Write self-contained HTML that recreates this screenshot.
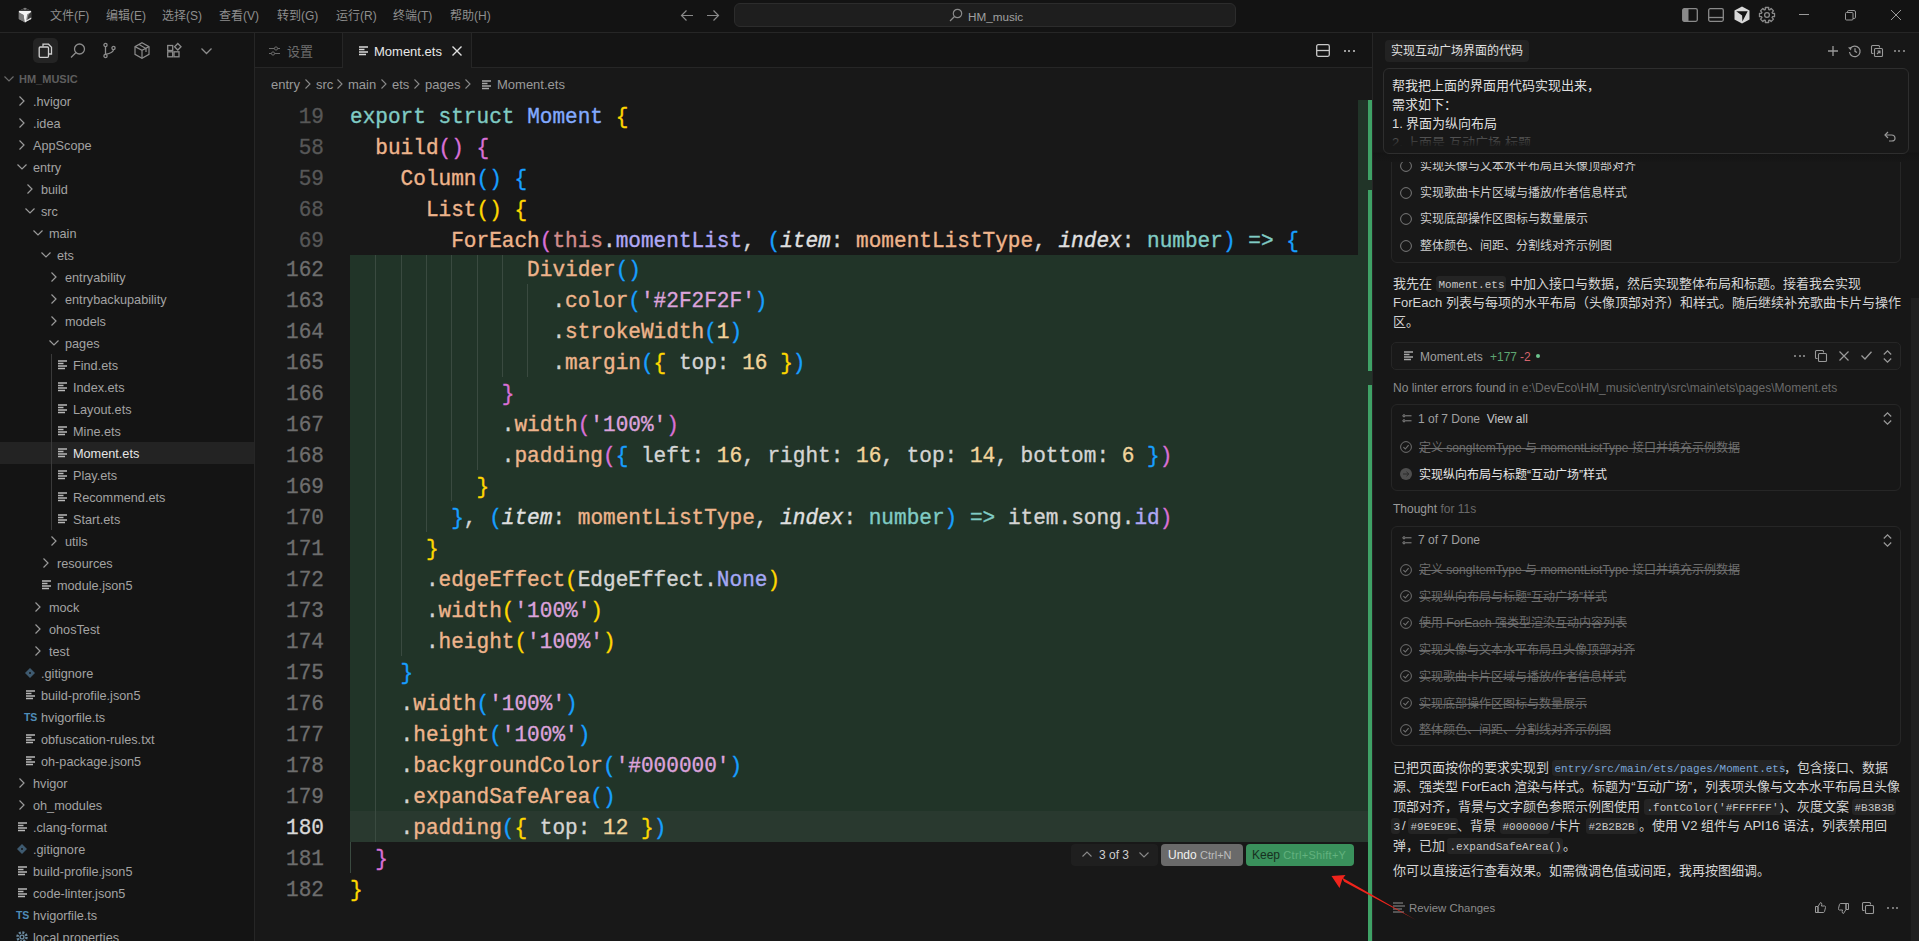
<!DOCTYPE html><html lang="zh-CN"><head><meta charset="utf-8"><style>
*{box-sizing:border-box;margin:0;padding:0}
html,body{width:1919px;height:941px;overflow:hidden;background:#181818}
body{position:relative;font-family:"Liberation Sans",sans-serif;color:#a8a8a8;font-size:13px}
.a{position:absolute;white-space:nowrap}
.m{font-family:"Liberation Mono",monospace}
svg.i{position:absolute;overflow:visible}
.code{position:absolute;left:350px;margin-top:1.5px;transform:scaleY(1.05);font-family:"Liberation Mono",monospace;font-size:21.08px;line-height:31px;height:31px;white-space:pre;color:#d4d4d4;-webkit-text-stroke:0.35px currentColor}
.ln{position:absolute;margin-top:1.5px;transform:scaleY(1.05);left:260px;width:64px;text-align:right;font-family:"Liberation Mono",monospace;font-size:21.08px;line-height:31px;color:#575757;-webkit-text-stroke:0.3px currentColor}
.k{color:#80cbc4}.c{color:#82aaff}.y{color:#ffd700}.p{color:#da70d6}.b{color:#179fff}
.f{color:#eeb48c}.th{color:#d08c8c}.pr{color:#b0a8f5}.it{font-style:italic;color:#e0e0e0}
.s{color:#dca3dc}.n{color:#f2d49b}.w{color:#d4d4d4}.nn{color:#a5a8f5}
.tree{position:absolute;margin-top:1px;height:22px;line-height:22px;font-size:12.7px;color:#a3a3a3;white-space:nowrap}
</style></head><body><div class="a" style="left:0;top:0;width:1919px;height:33px;background:#131313;border-bottom:1px solid #262626"></div><div class="a" style="left:0;top:33px;width:255px;height:908px;background:#141414;border-right:1px solid #262626"></div><div class="a" style="left:255px;top:33px;width:1117px;height:35px;background:#141414;border-bottom:1px solid #262626"></div><div class="a" style="left:255px;top:68px;width:1117px;height:873px;background:#181818"></div><div class="a" style="left:1372px;top:33px;width:547px;height:908px;background:#171717;border-left:1px solid #262626"></div><svg class="i" style="left:18px;top:7px" width="14" height="16" viewBox="0 0 14 16">
<path d="M7 0.8L13.2 4V12L7 15.2L0.8 12V4Z" fill="#8a8a8a"/>
<path d="M0.8 4L7 0.8L13.2 4Z" fill="#3a3a3a"/>
<path d="M5.5 1.8L7 0.8L8.5 1.8L7 3Z" fill="#888"/>
<path d="M13.2 4.5V12L9 14.2L10.5 8Z" fill="#3c3c3c"/>
<path d="M13.2 10.5V12L7 15.2L8 13.5Z" fill="#e8e8e8"/>
<path d="M0.8 4H13.2L12.8 5.3L9.2 7.2L7.8 15.2H6.6L5.6 8L1.2 5.4Z" fill="#f4f4f4"/>
<path d="M0.8 5.4L5.6 8L6.6 15.2L0.8 12Z" fill="#7a7a7a"/>
</svg><div class="a" style="left:50px;top:8px;font-size:12px;line-height:17px;color:#8e8e8e">文件(F)</div><div class="a" style="left:106px;top:8px;font-size:12px;line-height:17px;color:#8e8e8e">编辑(E)</div><div class="a" style="left:162px;top:8px;font-size:12px;line-height:17px;color:#8e8e8e">选择(S)</div><div class="a" style="left:219px;top:8px;font-size:12px;line-height:17px;color:#8e8e8e">查看(V)</div><div class="a" style="left:277px;top:8px;font-size:12px;line-height:17px;color:#8e8e8e">转到(G)</div><div class="a" style="left:336px;top:8px;font-size:12px;line-height:17px;color:#8e8e8e">运行(R)</div><div class="a" style="left:393px;top:8px;font-size:12px;line-height:17px;color:#8e8e8e">终端(T)</div><div class="a" style="left:450px;top:8px;font-size:12px;line-height:17px;color:#8e8e8e">帮助(H)</div><svg class="i" style="left:680px;top:9px" width="14" height="13" viewBox="0 0 14 13"><path d="M13 6.5H1.5M6.5 1.5L1.5 6.5L6.5 11.5" stroke="#8a8a8a" stroke-width="1.2" fill="none"/></svg><svg class="i" style="left:706px;top:9px" width="14" height="13" viewBox="0 0 14 13"><path d="M1 6.5H12.5M7.5 1.5L12.5 6.5L7.5 11.5" stroke="#8a8a8a" stroke-width="1.2" fill="none"/></svg><div class="a" style="left:734px;top:3px;width:502px;height:24px;background:#1e1e1e;border:1px solid #2c2c2c;border-radius:6px"></div><svg class="i" style="left:949px;top:8px" width="14" height="14" viewBox="0 0 14 14"><circle cx="8.5" cy="5.5" r="4.2" stroke="#8a8a8a" stroke-width="1.2" fill="none"/><path d="M5.5 8.5L1 13" stroke="#8a8a8a" stroke-width="1.3"/></svg><div class="a" style="left:968px;top:9px;font-size:11.7px;line-height:15px;color:#a0a0a0">HM_music</div><svg class="i" style="left:1682px;top:8px" width="16" height="14" viewBox="0 0 16 14"><rect x="0.7" y="0.7" width="14.6" height="12.6" rx="1.5" stroke="#8a8a8a" stroke-width="1.3" fill="none"/><rect x="1" y="1" width="5.5" height="12" fill="#8a8a8a"/></svg><svg class="i" style="left:1708px;top:8px" width="16" height="14" viewBox="0 0 16 14"><rect x="0.7" y="0.7" width="14.6" height="12.6" rx="1.5" stroke="#8a8a8a" stroke-width="1.3" fill="none"/><path d="M1 9.5H15" stroke="#8a8a8a" stroke-width="1.3"/></svg><svg class="i" style="left:1734px;top:6px" width="16" height="18" viewBox="0 0 16 18"><path d="M8 0.5L15.5 4.5V13.5L8 17.5L0.5 13.5V4.5Z" fill="#d8d8d8"/><path d="M2.2 5.2L13.7 5.3L8.4 15.4L8.1 9.5Z" fill="#131313"/></svg><svg class="i" style="left:1758px;top:6px" width="18" height="18" viewBox="0 0 18 18"><g fill="none" stroke="#8a8a8a" stroke-width="1.3" stroke-linejoin="round"><path d="M14.45 7.32L16.51 7.32L16.51 10.68L14.45 10.68L14.04 11.66L15.50 13.13L13.13 15.50L11.66 14.04L10.68 14.45L10.68 16.51L7.32 16.51L7.32 14.45L6.34 14.04L4.87 15.50L2.50 13.13L3.96 11.66L3.55 10.68L1.49 10.68L1.49 7.32L3.55 7.32L3.96 6.34L2.50 4.87L4.87 2.50L6.34 3.96L7.32 3.55L7.32 1.49L10.68 1.49L10.68 3.55L11.66 3.96L13.13 2.50L15.50 4.87L14.04 6.34Z"/><circle cx="9" cy="9" r="2.4"/></g></svg><div class="a" style="left:1799px;top:14px;width:10px;height:1px;background:#9a9a9a"></div><svg class="i" style="left:1845px;top:10px" width="11" height="11" viewBox="0 0 11 11"><rect x="0.5" y="2.5" width="7.5" height="7.5" rx="1" stroke="#9a9a9a" fill="none"/><path d="M2.5 2.5V1.8Q2.5 0.5 3.8 0.5H9Q10.5 0.5 10.5 2V7.2Q10.5 8.5 9.2 8.5H8" stroke="#9a9a9a" fill="none"/></svg><svg class="i" style="left:1891px;top:10px" width="10" height="10" viewBox="0 0 10 10"><path d="M0 0L10 10M10 0L0 10" stroke="#9a9a9a" stroke-width="1"/></svg><div class="a" style="left:33px;top:38px;width:25px;height:25px;background:#242424;border-radius:5px"></div><svg class="i" style="left:38px;top:43px" width="15" height="15" viewBox="0 0 15 15"><g fill="none" stroke="#d0d0d0" stroke-width="1.3"><path d="M5 3.5V1.2H10.5L13.5 4.2V11H11"/><rect x="1.2" y="4" width="9.3" height="10.3" rx="1"/></g></svg><svg class="i" style="left:70px;top:43px" width="16" height="15" viewBox="0 0 16 15"><g fill="none" stroke="#8c8c8c" stroke-width="1.3"><circle cx="9.5" cy="6" r="5"/><path d="M6 9.5L1 14.5"/></g></svg><svg class="i" style="left:103px;top:43px" width="13" height="15" viewBox="0 0 13 15"><g fill="none" stroke="#8c8c8c" stroke-width="1.3"><circle cx="2.5" cy="2" r="1.6"/><circle cx="2.5" cy="13" r="1.6"/><circle cx="10.5" cy="5" r="1.6"/><path d="M2.5 3.6V11.4M10.5 6.6Q10.5 10 2.5 11.4"/></g></svg><svg class="i" style="left:134px;top:42px" width="16" height="17" viewBox="0 0 16 17"><g fill="none" stroke="#8c8c8c" stroke-width="1.2"><path d="M8 0.8L15 4.6V12.4L8 16.2L1 12.4V4.6Z"/><path d="M1 4.6L8 8.4L15 4.6M8 8.4V16.2M5 2.5L12 6.5V10"/></g></svg><svg class="i" style="left:167px;top:43px" width="15" height="15" viewBox="0 0 15 15"><g fill="none" stroke="#8c8c8c" stroke-width="1.3"><rect x="0.7" y="2.5" width="5" height="5"/><rect x="0.7" y="8.8" width="5" height="5"/><rect x="7" y="8.8" width="5" height="5"/><path d="M10.8 0.5L14 3.8L10.8 7L7.6 3.8Z"/></g></svg><svg class="i" style="left:201px;top:48px" width="11" height="6" viewBox="0 0 11 6"><path d="M0.5 0.5L5.5 5.5L10.5 0.5" fill="none" stroke="#8c8c8c" stroke-width="1.3"/></svg><svg class="i" style="left:4px;top:76px" width="10" height="6" viewBox="0 0 10 6"><path d="M0.5 0.5L5 5L9.5 0.5" fill="none" stroke="#6a6a6a" stroke-width="1.2"/></svg><div class="a" style="left:19px;top:72px;font-size:11px;line-height:14px;font-weight:bold;color:#5e5e5e">HM_MUSIC</div><div class="a" style="left:0;top:442px;width:254px;height:22px;background:#232323"></div><div class="a" style="left:51px;top:354px;width:1px;height:176px;background:#3a3a3a"></div><svg class="i" style="left:19px;top:96px" width="6" height="10" viewBox="0 0 6 10"><path d="M0.5 0.5L5 5L0.5 9.5" fill="none" stroke="#9a9a9a" stroke-width="1.2"/></svg><div class="tree" style="left:33px;top:90px;color:#a3a3a3">.hvigor</div><svg class="i" style="left:19px;top:118px" width="6" height="10" viewBox="0 0 6 10"><path d="M0.5 0.5L5 5L0.5 9.5" fill="none" stroke="#9a9a9a" stroke-width="1.2"/></svg><div class="tree" style="left:33px;top:112px;color:#a3a3a3">.idea</div><svg class="i" style="left:19px;top:140px" width="6" height="10" viewBox="0 0 6 10"><path d="M0.5 0.5L5 5L0.5 9.5" fill="none" stroke="#9a9a9a" stroke-width="1.2"/></svg><div class="tree" style="left:33px;top:134px;color:#a3a3a3">AppScope</div><svg class="i" style="left:17px;top:164px" width="10" height="6" viewBox="0 0 10 6"><path d="M0.5 0.5L5 5L9.5 0.5" fill="none" stroke="#9a9a9a" stroke-width="1.2"/></svg><div class="tree" style="left:33px;top:156px;color:#a3a3a3">entry</div><svg class="i" style="left:27px;top:184px" width="6" height="10" viewBox="0 0 6 10"><path d="M0.5 0.5L5 5L0.5 9.5" fill="none" stroke="#9a9a9a" stroke-width="1.2"/></svg><div class="tree" style="left:41px;top:178px;color:#a3a3a3">build</div><svg class="i" style="left:25px;top:208px" width="10" height="6" viewBox="0 0 10 6"><path d="M0.5 0.5L5 5L9.5 0.5" fill="none" stroke="#9a9a9a" stroke-width="1.2"/></svg><div class="tree" style="left:41px;top:200px;color:#a3a3a3">src</div><svg class="i" style="left:33px;top:230px" width="10" height="6" viewBox="0 0 10 6"><path d="M0.5 0.5L5 5L9.5 0.5" fill="none" stroke="#9a9a9a" stroke-width="1.2"/></svg><div class="tree" style="left:49px;top:222px;color:#a3a3a3">main</div><svg class="i" style="left:41px;top:252px" width="10" height="6" viewBox="0 0 10 6"><path d="M0.5 0.5L5 5L9.5 0.5" fill="none" stroke="#9a9a9a" stroke-width="1.2"/></svg><div class="tree" style="left:57px;top:244px;color:#a3a3a3">ets</div><svg class="i" style="left:51px;top:272px" width="6" height="10" viewBox="0 0 6 10"><path d="M0.5 0.5L5 5L0.5 9.5" fill="none" stroke="#9a9a9a" stroke-width="1.2"/></svg><div class="tree" style="left:65px;top:266px;color:#a3a3a3">entryability</div><svg class="i" style="left:51px;top:294px" width="6" height="10" viewBox="0 0 6 10"><path d="M0.5 0.5L5 5L0.5 9.5" fill="none" stroke="#9a9a9a" stroke-width="1.2"/></svg><div class="tree" style="left:65px;top:288px;color:#a3a3a3">entrybackupability</div><svg class="i" style="left:51px;top:316px" width="6" height="10" viewBox="0 0 6 10"><path d="M0.5 0.5L5 5L0.5 9.5" fill="none" stroke="#9a9a9a" stroke-width="1.2"/></svg><div class="tree" style="left:65px;top:310px;color:#a3a3a3">models</div><svg class="i" style="left:49px;top:340px" width="10" height="6" viewBox="0 0 10 6"><path d="M0.5 0.5L5 5L9.5 0.5" fill="none" stroke="#9a9a9a" stroke-width="1.2"/></svg><div class="tree" style="left:65px;top:332px;color:#a3a3a3">pages</div><svg class="i" style="left:58px;top:360px" width="10" height="10" viewBox="0 0 10 10"><path d="M0 1H9M0 3.5H5.5M0 6H9M0 8.5H7" stroke="#b8b8b8" stroke-width="1.4"/></svg><div class="tree" style="left:73px;top:354px;color:#a3a3a3">Find.ets</div><svg class="i" style="left:58px;top:382px" width="10" height="10" viewBox="0 0 10 10"><path d="M0 1H9M0 3.5H5.5M0 6H9M0 8.5H7" stroke="#b8b8b8" stroke-width="1.4"/></svg><div class="tree" style="left:73px;top:376px;color:#a3a3a3">Index.ets</div><svg class="i" style="left:58px;top:404px" width="10" height="10" viewBox="0 0 10 10"><path d="M0 1H9M0 3.5H5.5M0 6H9M0 8.5H7" stroke="#b8b8b8" stroke-width="1.4"/></svg><div class="tree" style="left:73px;top:398px;color:#a3a3a3">Layout.ets</div><svg class="i" style="left:58px;top:426px" width="10" height="10" viewBox="0 0 10 10"><path d="M0 1H9M0 3.5H5.5M0 6H9M0 8.5H7" stroke="#b8b8b8" stroke-width="1.4"/></svg><div class="tree" style="left:73px;top:420px;color:#a3a3a3">Mine.ets</div><svg class="i" style="left:58px;top:448px" width="10" height="10" viewBox="0 0 10 10"><path d="M0 1H9M0 3.5H5.5M0 6H9M0 8.5H7" stroke="#b8b8b8" stroke-width="1.4"/></svg><div class="tree" style="left:73px;top:442px;color:#e6e6e6">Moment.ets</div><svg class="i" style="left:58px;top:470px" width="10" height="10" viewBox="0 0 10 10"><path d="M0 1H9M0 3.5H5.5M0 6H9M0 8.5H7" stroke="#b8b8b8" stroke-width="1.4"/></svg><div class="tree" style="left:73px;top:464px;color:#a3a3a3">Play.ets</div><svg class="i" style="left:58px;top:492px" width="10" height="10" viewBox="0 0 10 10"><path d="M0 1H9M0 3.5H5.5M0 6H9M0 8.5H7" stroke="#b8b8b8" stroke-width="1.4"/></svg><div class="tree" style="left:73px;top:486px;color:#a3a3a3">Recommend.ets</div><svg class="i" style="left:58px;top:514px" width="10" height="10" viewBox="0 0 10 10"><path d="M0 1H9M0 3.5H5.5M0 6H9M0 8.5H7" stroke="#b8b8b8" stroke-width="1.4"/></svg><div class="tree" style="left:73px;top:508px;color:#a3a3a3">Start.ets</div><svg class="i" style="left:51px;top:536px" width="6" height="10" viewBox="0 0 6 10"><path d="M0.5 0.5L5 5L0.5 9.5" fill="none" stroke="#9a9a9a" stroke-width="1.2"/></svg><div class="tree" style="left:65px;top:530px;color:#a3a3a3">utils</div><svg class="i" style="left:43px;top:558px" width="6" height="10" viewBox="0 0 6 10"><path d="M0.5 0.5L5 5L0.5 9.5" fill="none" stroke="#9a9a9a" stroke-width="1.2"/></svg><div class="tree" style="left:57px;top:552px;color:#a3a3a3">resources</div><svg class="i" style="left:42px;top:580px" width="10" height="10" viewBox="0 0 10 10"><path d="M0 1H9M0 3.5H5.5M0 6H9M0 8.5H7" stroke="#b8b8b8" stroke-width="1.4"/></svg><div class="tree" style="left:57px;top:574px;color:#a3a3a3">module.json5</div><svg class="i" style="left:35px;top:602px" width="6" height="10" viewBox="0 0 6 10"><path d="M0.5 0.5L5 5L0.5 9.5" fill="none" stroke="#9a9a9a" stroke-width="1.2"/></svg><div class="tree" style="left:49px;top:596px;color:#a3a3a3">mock</div><svg class="i" style="left:35px;top:624px" width="6" height="10" viewBox="0 0 6 10"><path d="M0.5 0.5L5 5L0.5 9.5" fill="none" stroke="#9a9a9a" stroke-width="1.2"/></svg><div class="tree" style="left:49px;top:618px;color:#a3a3a3">ohosTest</div><svg class="i" style="left:35px;top:646px" width="6" height="10" viewBox="0 0 6 10"><path d="M0.5 0.5L5 5L0.5 9.5" fill="none" stroke="#9a9a9a" stroke-width="1.2"/></svg><div class="tree" style="left:49px;top:640px;color:#a3a3a3">test</div><svg class="i" style="left:25px;top:668px" width="10" height="10" viewBox="0 0 10 10"><path d="M5 0L10 5L5 10L0 5Z" fill="#3e5a70"/><circle cx="5" cy="5" r="1" fill="#141414"/></svg><div class="tree" style="left:41px;top:662px;color:#a3a3a3">.gitignore</div><svg class="i" style="left:26px;top:690px" width="10" height="10" viewBox="0 0 10 10"><path d="M0 1H9M0 3.5H5.5M0 6H9M0 8.5H7" stroke="#b8b8b8" stroke-width="1.4"/></svg><div class="tree" style="left:41px;top:684px;color:#a3a3a3">build-profile.json5</div><div class="a" style="left:24px;top:711px;font-size:10.5px;line-height:12px;font-weight:bold;color:#4f8db8;letter-spacing:-0.2px">TS</div><div class="tree" style="left:41px;top:706px;color:#a3a3a3">hvigorfile.ts</div><svg class="i" style="left:26px;top:734px" width="10" height="10" viewBox="0 0 10 10"><path d="M0 1H9M0 3.5H5.5M0 6H9M0 8.5H7" stroke="#b8b8b8" stroke-width="1.4"/></svg><div class="tree" style="left:41px;top:728px;color:#a3a3a3">obfuscation-rules.txt</div><svg class="i" style="left:26px;top:756px" width="10" height="10" viewBox="0 0 10 10"><path d="M0 1H9M0 3.5H5.5M0 6H9M0 8.5H7" stroke="#b8b8b8" stroke-width="1.4"/></svg><div class="tree" style="left:41px;top:750px;color:#a3a3a3">oh-package.json5</div><svg class="i" style="left:19px;top:778px" width="6" height="10" viewBox="0 0 6 10"><path d="M0.5 0.5L5 5L0.5 9.5" fill="none" stroke="#9a9a9a" stroke-width="1.2"/></svg><div class="tree" style="left:33px;top:772px;color:#a3a3a3">hvigor</div><svg class="i" style="left:19px;top:800px" width="6" height="10" viewBox="0 0 6 10"><path d="M0.5 0.5L5 5L0.5 9.5" fill="none" stroke="#9a9a9a" stroke-width="1.2"/></svg><div class="tree" style="left:33px;top:794px;color:#a3a3a3">oh_modules</div><svg class="i" style="left:18px;top:822px" width="10" height="10" viewBox="0 0 10 10"><path d="M0 1H9M0 3.5H5.5M0 6H9M0 8.5H7" stroke="#b8b8b8" stroke-width="1.4"/></svg><div class="tree" style="left:33px;top:816px;color:#a3a3a3">.clang-format</div><svg class="i" style="left:17px;top:844px" width="10" height="10" viewBox="0 0 10 10"><path d="M5 0L10 5L5 10L0 5Z" fill="#3e5a70"/><circle cx="5" cy="5" r="1" fill="#141414"/></svg><div class="tree" style="left:33px;top:838px;color:#a3a3a3">.gitignore</div><svg class="i" style="left:18px;top:866px" width="10" height="10" viewBox="0 0 10 10"><path d="M0 1H9M0 3.5H5.5M0 6H9M0 8.5H7" stroke="#b8b8b8" stroke-width="1.4"/></svg><div class="tree" style="left:33px;top:860px;color:#a3a3a3">build-profile.json5</div><svg class="i" style="left:18px;top:888px" width="10" height="10" viewBox="0 0 10 10"><path d="M0 1H9M0 3.5H5.5M0 6H9M0 8.5H7" stroke="#b8b8b8" stroke-width="1.4"/></svg><div class="tree" style="left:33px;top:882px;color:#a3a3a3">code-linter.json5</div><div class="a" style="left:16px;top:909px;font-size:10.5px;line-height:12px;font-weight:bold;color:#4f8db8;letter-spacing:-0.2px">TS</div><div class="tree" style="left:33px;top:904px;color:#a3a3a3">hvigorfile.ts</div><svg class="i" style="left:16px;top:931px" width="12" height="12" viewBox="0 0 12 12"><circle cx="6" cy="6" r="4.5" fill="none" stroke="#6a8aa0" stroke-width="2.5" stroke-dasharray="2 1.5"/><circle cx="6" cy="6" r="2.6" fill="#6a8aa0"/><circle cx="6" cy="6" r="1.2" fill="#141414"/></svg><div class="tree" style="left:33px;top:926px;color:#a3a3a3">local.properties</div><div class="a" style="left:342px;top:33px;width:130px;height:35px;background:#181818;border-left:1px solid #262626;border-right:1px solid #262626"></div><svg class="i" style="left:269px;top:45px" width="12" height="12" viewBox="0 0 12 12"><g fill="none" stroke="#6a6a6a" stroke-width="1"><path d="M0 3.5H11M0 8.5H11"/></g><circle cx="7" cy="3.5" r="1.6" fill="#141414" stroke="#6a6a6a"/><circle cx="4" cy="8.5" r="1.6" fill="#141414" stroke="#6a6a6a"/></svg><div class="a" style="left:287px;top:43px;font-size:13px;line-height:17px;color:#6e6e6e">设置</div><svg class="i" style="left:359px;top:46px" width="10" height="10" viewBox="0 0 10 10"><path d="M0 1H9M0 3.5H5.5M0 6H9M0 8.5H7" stroke="#d8d8d8" stroke-width="1.4"/></svg><div class="a" style="left:374px;top:43px;font-size:13px;line-height:17px;color:#e8e8e8">Moment.ets</div><svg class="i" style="left:452px;top:46px" width="10" height="10" viewBox="0 0 10 10"><path d="M0.5 0.5L9.5 9.5M9.5 0.5L0.5 9.5" stroke="#e0e0e0" stroke-width="1.4"/></svg><svg class="i" style="left:1316px;top:44px" width="14" height="13" viewBox="0 0 14 13"><rect x="0.7" y="0.7" width="12.6" height="11.6" rx="1.5" fill="none" stroke="#c8c8c8" stroke-width="1.3"/><path d="M1 6.5H13" stroke="#c8c8c8" stroke-width="1.3"/></svg><div class="a" style="left:1343.5px;top:50px;width:2.4px;height:2.4px;background:#c8c8c8;border-radius:50%"></div><div class="a" style="left:1348px;top:50px;width:2.4px;height:2.4px;background:#c8c8c8;border-radius:50%"></div><div class="a" style="left:1352.5px;top:50px;width:2.4px;height:2.4px;background:#c8c8c8;border-radius:50%"></div><div class="a" style="left:271px;top:76px;font-size:13px;line-height:17px;color:#9a9a9a">entry</div><div class="a" style="left:316px;top:76px;font-size:13px;line-height:17px;color:#9a9a9a">src</div><div class="a" style="left:348px;top:76px;font-size:13px;line-height:17px;color:#9a9a9a">main</div><div class="a" style="left:392px;top:76px;font-size:13px;line-height:17px;color:#9a9a9a">ets</div><div class="a" style="left:425px;top:76px;font-size:13px;line-height:17px;color:#9a9a9a">pages</div><svg class="i" style="left:305px;top:79px" width="6" height="10" viewBox="0 0 6 10"><path d="M0.5 0.5L5 5L0.5 9.5" fill="none" stroke="#8a8a8a" stroke-width="1.1"/></svg><svg class="i" style="left:337px;top:79px" width="6" height="10" viewBox="0 0 6 10"><path d="M0.5 0.5L5 5L0.5 9.5" fill="none" stroke="#8a8a8a" stroke-width="1.1"/></svg><svg class="i" style="left:381px;top:79px" width="6" height="10" viewBox="0 0 6 10"><path d="M0.5 0.5L5 5L0.5 9.5" fill="none" stroke="#8a8a8a" stroke-width="1.1"/></svg><svg class="i" style="left:414px;top:79px" width="6" height="10" viewBox="0 0 6 10"><path d="M0.5 0.5L5 5L0.5 9.5" fill="none" stroke="#8a8a8a" stroke-width="1.1"/></svg><svg class="i" style="left:465px;top:79px" width="6" height="10" viewBox="0 0 6 10"><path d="M0.5 0.5L5 5L0.5 9.5" fill="none" stroke="#8a8a8a" stroke-width="1.1"/></svg><svg class="i" style="left:482px;top:80px" width="10" height="10" viewBox="0 0 10 10"><path d="M0 1H9M0 3.5H5.5M0 6H9M0 8.5H7" stroke="#a8a8a8" stroke-width="1.4"/></svg><div class="a" style="left:497px;top:76px;font-size:13px;line-height:17px;color:#9a9a9a">Moment.ets</div><div class="a" style="left:350px;top:253px;width:1018px;height:558px;background:#213428"></div><div class="a" style="left:350px;top:811px;width:1018px;height:31px;background:#29392f"></div><div class="a" style="left:375.3px;top:253px;width:1px;height:589px;background:#3a4a40"></div><div class="a" style="left:350px;top:842px;width:1px;height:31px;background:#3a4a40"></div><div class="a" style="left:400.6px;top:253px;width:1px;height:403px;background:#3a4a40"></div><div class="a" style="left:425.9px;top:253px;width:1px;height:279px;background:#3a4a40"></div><div class="a" style="left:451.2px;top:253px;width:1px;height:248px;background:#3a4a40"></div><div class="a" style="left:476.5px;top:253px;width:1px;height:217px;background:#3a4a40"></div><div class="a" style="left:501.8px;top:253px;width:1px;height:124px;background:#3a4a40"></div><div class="a" style="left:527.1px;top:284px;width:1px;height:93px;background:#3a4a40"></div><div class="a" style="left:400.6px;top:625px;width:1px;height:0px;background:#3a4a40"></div><div class="a" style="left:255px;top:100px;width:1103px;height:155px;background:#181818"></div><div class="ln" style="top:100px">19</div><div class="code" style="top:100px;left:350.0px"><span class="k">export</span> <span class="k">struct</span> <span class="c">Moment</span> <span class="y">{</span></div><div class="ln" style="top:131px">58</div><div class="code" style="top:131px;left:375.3px"><span class="f">build</span><span class="p">()</span> <span class="p">{</span></div><div class="ln" style="top:162px">59</div><div class="code" style="top:162px;left:400.6px"><span class="f">Column</span><span class="b">()</span> <span class="b">{</span></div><div class="ln" style="top:193px">68</div><div class="code" style="top:193px;left:425.9px"><span class="f">List</span><span class="y">()</span> <span class="y">{</span></div><div class="ln" style="top:224px">69</div><div class="code" style="top:224px;left:451.2px"><span class="f">ForEach</span><span class="p">(</span><span class="th">this</span><span class="w">.</span><span class="pr">momentList</span><span class="w">, </span><span class="b">(</span><span class="it">item</span><span class="w">: </span><span class="f">momentListType</span><span class="w">, </span><span class="it">index</span><span class="w">: </span><span class="k">number</span><span class="b">)</span> <span class="k">=></span> <span class="b">{</span></div><div class="ln" style="top:253px;color:#6e6e6e">162</div><div class="code" style="top:253px;left:527.1px"><span class="f">Divider</span><span class="b">()</span></div><div class="ln" style="top:284px;color:#6e6e6e">163</div><div class="code" style="top:284px;left:552.4px"><span class="w">.</span><span class="f">color</span><span class="b">(</span><span class="s">'#2F2F2F'</span><span class="b">)</span></div><div class="ln" style="top:315px;color:#6e6e6e">164</div><div class="code" style="top:315px;left:552.4px"><span class="w">.</span><span class="f">strokeWidth</span><span class="b">(</span><span class="n">1</span><span class="b">)</span></div><div class="ln" style="top:346px;color:#6e6e6e">165</div><div class="code" style="top:346px;left:552.4px"><span class="w">.</span><span class="f">margin</span><span class="b">(</span><span class="y">{</span><span class="w"> top: </span><span class="n">16</span> <span class="y">}</span><span class="b">)</span></div><div class="ln" style="top:377px;color:#6e6e6e">166</div><div class="code" style="top:377px;left:501.8px"><span class="p">}</span></div><div class="ln" style="top:408px;color:#6e6e6e">167</div><div class="code" style="top:408px;left:501.8px"><span class="w">.</span><span class="f">width</span><span class="p">(</span><span class="s">'100%'</span><span class="p">)</span></div><div class="ln" style="top:439px;color:#6e6e6e">168</div><div class="code" style="top:439px;left:501.8px"><span class="w">.</span><span class="f">padding</span><span class="p">(</span><span class="b">{</span><span class="w"> left: </span><span class="n">16</span><span class="w">, right: </span><span class="n">16</span><span class="w">, top: </span><span class="n">14</span><span class="w">, bottom: </span><span class="n">6</span> <span class="b">}</span><span class="p">)</span></div><div class="ln" style="top:470px;color:#6e6e6e">169</div><div class="code" style="top:470px;left:476.5px"><span class="y">}</span></div><div class="ln" style="top:501px;color:#6e6e6e">170</div><div class="code" style="top:501px;left:451.2px"><span class="b">}</span><span class="w">, </span><span class="b">(</span><span class="it">item</span><span class="w">: </span><span class="f">momentListType</span><span class="w">, </span><span class="it">index</span><span class="w">: </span><span class="k">number</span><span class="b">)</span> <span class="k">=></span><span class="w"> item.song.</span><span class="pr">id</span><span class="p">)</span></div><div class="ln" style="top:532px;color:#6e6e6e">171</div><div class="code" style="top:532px;left:425.9px"><span class="y">}</span></div><div class="ln" style="top:563px;color:#6e6e6e">172</div><div class="code" style="top:563px;left:425.9px"><span class="w">.</span><span class="f">edgeEffect</span><span class="y">(</span><span class="w">EdgeEffect.</span><span class="nn">None</span><span class="y">)</span></div><div class="ln" style="top:594px;color:#6e6e6e">173</div><div class="code" style="top:594px;left:425.9px"><span class="w">.</span><span class="f">width</span><span class="y">(</span><span class="s">'100%'</span><span class="y">)</span></div><div class="ln" style="top:625px;color:#6e6e6e">174</div><div class="code" style="top:625px;left:425.9px"><span class="w">.</span><span class="f">height</span><span class="y">(</span><span class="s">'100%'</span><span class="y">)</span></div><div class="ln" style="top:656px;color:#6e6e6e">175</div><div class="code" style="top:656px;left:400.6px"><span class="b">}</span></div><div class="ln" style="top:687px;color:#6e6e6e">176</div><div class="code" style="top:687px;left:400.6px"><span class="w">.</span><span class="f">width</span><span class="b">(</span><span class="s">'100%'</span><span class="b">)</span></div><div class="ln" style="top:718px;color:#6e6e6e">177</div><div class="code" style="top:718px;left:400.6px"><span class="w">.</span><span class="f">height</span><span class="b">(</span><span class="s">'100%'</span><span class="b">)</span></div><div class="ln" style="top:749px;color:#6e6e6e">178</div><div class="code" style="top:749px;left:400.6px"><span class="w">.</span><span class="f">backgroundColor</span><span class="b">(</span><span class="s">'#000000'</span><span class="b">)</span></div><div class="ln" style="top:780px;color:#6e6e6e">179</div><div class="code" style="top:780px;left:400.6px"><span class="w">.</span><span class="f">expandSafeArea</span><span class="b">()</span></div><div class="ln" style="top:811px;color:#d8d8d8">180</div><div class="code" style="top:811px;left:400.6px"><span class="w">.</span><span class="f">padding</span><span class="b">(</span><span class="y">{</span><span class="w"> top: </span><span class="n">12</span> <span class="y">}</span><span class="b">)</span></div><div class="ln" style="top:842px;color:#6e6e6e">181</div><div class="code" style="top:842px;left:375.3px"><span class="p">}</span></div><div class="ln" style="top:873px;color:#6e6e6e">182</div><div class="code" style="top:873px;left:350.0px"><span class="y">}</span></div><div class="a" style="left:1358px;top:100px;width:14px;height:155px;background:#213428"></div><div class="a" style="left:1368px;top:100px;width:4px;height:841px;background:#213428"></div><div class="a" style="left:1368px;top:100px;width:4px;height:80px;background:#3fa266"></div><div class="a" style="left:1368px;top:190px;width:4px;height:181px;background:#3fa266"></div><div class="a" style="left:1368px;top:385px;width:4px;height:556px;background:#3fa266"></div><div class="a" style="left:1071px;top:844px;width:87px;height:22px;background:#1f1f1f;border-radius:4px"></div><svg class="i" style="left:1082px;top:851px" width="10" height="6" viewBox="0 0 10 6"><path d="M0.5 5.5L5 1L9.5 5.5" fill="none" stroke="#8a8a8a" stroke-width="1.1"/></svg><div class="a" style="left:1099px;top:847px;font-size:12px;line-height:16px;color:#d0d0d0">3 of 3</div><svg class="i" style="left:1139px;top:852px" width="10" height="6" viewBox="0 0 10 6"><path d="M0.5 0.5L5 5L9.5 0.5" fill="none" stroke="#8a8a8a" stroke-width="1.1"/></svg><div class="a" style="left:1161px;top:844px;width:82px;height:22px;background:#6a6a6a;border-radius:4px"></div><div class="a" style="left:1168px;top:847px;font-size:12px;line-height:16px;color:#f0f0f0">Undo <span style="color:#bdbdbd;font-size:11px">Ctrl+N</span></div><div class="a" style="left:1246px;top:844px;width:108px;height:22px;background:#3a915c;border-radius:4px"></div><div class="a" style="left:1252px;top:847px;font-size:12px;line-height:16px;color:#17301f">Keep <span style="color:#62b27e;font-size:11px;letter-spacing:0.3px">Ctrl+Shift+Y</span></div><div class="a" style="left:1385px;top:40px;width:144px;height:22px;background:#222;border-radius:4px"></div><div class="a" style="left:1391px;top:43px;font-size:12px;line-height:16px;color:#e0e0e0">实现互动广场界面的代码</div><svg class="i" style="left:1828px;top:46px" width="10" height="10" viewBox="0 0 10 10"><path d="M5 0V10M0 5H10" stroke="#9a9a9a" stroke-width="1.3"/></svg><svg class="i" style="left:1848px;top:45px" width="13" height="12" viewBox="0 0 13 12"><g fill="none" stroke="#9a9a9a" stroke-width="1.2"><path d="M2.3 3.5A5.3 5.3 0 1 1 1.5 7"/><path d="M7 3.2V6.3L9 7.6"/></g><path d="M0 2.5L3.5 2L3 5.5Z" fill="#9a9a9a"/></svg><svg class="i" style="left:1871px;top:45px" width="12" height="12" viewBox="0 0 12 12"><g fill="none" stroke="#9a9a9a" stroke-width="1.1"><rect x="3.5" y="3.5" width="8" height="8" rx="1"/><path d="M2.5 8.5H1.5Q0.5 8.5 0.5 7.5V1.5Q0.5 0.5 1.5 0.5H7.5Q8.5 0.5 8.5 1.5V2.5"/><path d="M6 9L9 6M6.5 6H9V8.5"/></g></svg><div class="a" style="left:1893.5px;top:50px;width:2.4px;height:2.4px;background:#9a9a9a;border-radius:50%"></div><div class="a" style="left:1898px;top:50px;width:2.4px;height:2.4px;background:#9a9a9a;border-radius:50%"></div><div class="a" style="left:1902.5px;top:50px;width:2.4px;height:2.4px;background:#9a9a9a;border-radius:50%"></div><div class="a" style="left:1391px;top:120px;width:510px;height:143px;border:1px solid #262626;border-radius:6px;background:#181818"></div><svg class="i" style="left:1400px;top:160.0px" width="12" height="12" viewBox="0 0 12 12"><circle cx="6" cy="6" r="5.4" fill="none" stroke="#7a7a7a" stroke-width="1"/></svg><div class="a" style="left:1420px;top:158.0px;font-size:12px;line-height:16px;color:#cfcfcf">实现头像与文本水平布局且头像顶部对齐</div><svg class="i" style="left:1400px;top:186.5px" width="12" height="12" viewBox="0 0 12 12"><circle cx="6" cy="6" r="5.4" fill="none" stroke="#7a7a7a" stroke-width="1"/></svg><div class="a" style="left:1420px;top:184.5px;font-size:12px;line-height:16px;color:#cfcfcf">实现歌曲卡片区域与播放/作者信息样式</div><svg class="i" style="left:1400px;top:213.0px" width="12" height="12" viewBox="0 0 12 12"><circle cx="6" cy="6" r="5.4" fill="none" stroke="#7a7a7a" stroke-width="1"/></svg><div class="a" style="left:1420px;top:211.0px;font-size:12px;line-height:16px;color:#cfcfcf">实现底部操作区图标与数量展示</div><svg class="i" style="left:1400px;top:239.5px" width="12" height="12" viewBox="0 0 12 12"><circle cx="6" cy="6" r="5.4" fill="none" stroke="#7a7a7a" stroke-width="1"/></svg><div class="a" style="left:1420px;top:237.5px;font-size:12px;line-height:16px;color:#cfcfcf">整体颜色、间距、分割线对齐示例图</div><div class="a" style="left:1373px;top:64px;width:546px;height:98px;background:linear-gradient(#171717 0,#171717 88px,#141414 89px,#171717 98px)"></div><div class="a" style="left:1383px;top:68px;width:526px;height:86px;border:1px solid #2e2e2e;border-radius:6px;background:#181818;overflow:hidden"></div><div class="a" style="left:1392px;top:77px;font-size:13px;line-height:18px;color:#dedede">帮我把上面的界面用代码实现出来，</div><div class="a" style="left:1392px;top:96px;font-size:13px;line-height:18px;color:#dedede">需求如下：</div><div class="a" style="left:1392px;top:115px;font-size:13px;line-height:18px;color:#dedede">1. 界面为纵向布局</div><div class="a" style="left:1392px;top:134px;height:12px;overflow:hidden;font-size:13px;line-height:18px;color:#6a6a6a">2. 上面是 互动广场 标题</div><div class="a" style="left:1384px;top:136px;width:524px;height:10px;background:linear-gradient(rgba(24,24,24,0.2),rgba(24,24,24,0.85))"></div><svg class="i" style="left:1884px;top:131px" width="12" height="11" viewBox="0 0 12 11"><g fill="none" stroke="#9a9a9a" stroke-width="1.2"><path d="M4 1L1 4L4 7"/><path d="M1 4H7.5Q11 4 11 7.2Q11 10 7.5 10H5"/></g></svg><div class="a" style="left:1393px;top:275px;font-size:13px;line-height:18px;color:#d4d4d4">我先在</div><div class="a" style="left:1436px;top:276px;width:70px;height:16px;background:#242424;border-radius:3px"></div><div class="a m" style="left:1438.5px;top:277px;font-size:11px;line-height:16px;color:#c8c8c8">Moment.ets</div><div class="a" style="left:1510px;top:275px;font-size:13px;line-height:18px;color:#d4d4d4">中加入接口与数据，然后实现整体布局和标题。接着我会实现</div><div class="a" style="left:1393px;top:294px;font-size:13px;line-height:18px;color:#d4d4d4">ForEach 列表与每项的水平布局（头像顶部对齐）和样式。随后继续补充歌曲卡片与操作</div><div class="a" style="left:1393px;top:313px;font-size:13px;line-height:18px;color:#d4d4d4">区。</div><div class="a" style="left:1391px;top:342px;width:510px;height:28px;border:1px solid #262626;border-radius:5px;background:#191919"></div><svg class="i" style="left:1404px;top:351px" width="10" height="10" viewBox="0 0 10 10"><path d="M0 1H9M0 3.5H5.5M0 6H9M0 8.5H7" stroke="#a8a8a8" stroke-width="1.4"/></svg><div class="a" style="left:1420px;top:349px;font-size:12px;line-height:16px;color:#a0a0a0">Moment.ets</div><div class="a" style="left:1490px;top:349px;font-size:12px;line-height:16px;color:#5ea672">+177</div><div class="a" style="left:1520px;top:349px;font-size:12px;line-height:16px;color:#d4646c">-2</div><div class="a" style="left:1536px;top:354px;width:4px;height:4px;border-radius:50%;background:#6cc58e"></div><div class="a" style="left:1794px;top:355px;width:2.2px;height:2.2px;background:#9a9a9a;border-radius:50%"></div><div class="a" style="left:1798.5px;top:355px;width:2.2px;height:2.2px;background:#9a9a9a;border-radius:50%"></div><div class="a" style="left:1803px;top:355px;width:2.2px;height:2.2px;background:#9a9a9a;border-radius:50%"></div><svg class="i" style="left:1815px;top:350px" width="12" height="12" viewBox="0 0 12 12"><g fill="none" stroke="#9a9a9a" stroke-width="1.1"><rect x="3.5" y="3.5" width="8" height="8" rx="1"/><path d="M2.5 8.5H1.5Q0.5 8.5 0.5 7.5V1.5Q0.5 0.5 1.5 0.5H7.5Q8.5 0.5 8.5 1.5V2.5"/></g></svg><svg class="i" style="left:1839px;top:351px" width="10" height="10" viewBox="0 0 10 10"><path d="M0.5 0.5L9.5 9.5M9.5 0.5L0.5 9.5" stroke="#9a9a9a" stroke-width="1.2"/></svg><svg class="i" style="left:1861px;top:351px" width="11" height="9" viewBox="0 0 11 9"><path d="M0.5 4.5L4 8L10.5 0.8" fill="none" stroke="#9a9a9a" stroke-width="1.3"/></svg><svg class="i" style="left:1883px;top:350px" width="9" height="13" viewBox="0 0 9 13"><path d="M0.8 4.5L4.5 0.8L8.2 4.5M0.8 8.5L4.5 12.2L8.2 8.5" fill="none" stroke="#9a9a9a" stroke-width="1.2"/></svg><div class="a" style="left:1393px;top:380px;font-size:12px;line-height:16px;color:#8c8c8c">No linter errors found <span style="color:#6a6a6a">in e:\DevEco\HM_music\entry\src\main\ets\pages\Moment.ets</span></div><div class="a" style="left:1391px;top:404px;width:510px;height:87px;border:1px solid #262626;border-radius:6px"></div><svg class="i" style="left:1402px;top:414px" width="10" height="9" viewBox="0 0 10 9"><g fill="none" stroke="#8a8a8a" stroke-width="1"><circle cx="2" cy="1.8" r="1.1"/><circle cx="2" cy="6.8" r="1.1"/><path d="M3.5 1.8H9.5M3.5 6.8H9.5"/></g></svg><div class="a" style="left:1418px;top:411px;font-size:12px;line-height:16px;color:#a0a0a0">1 of 7 Done&nbsp; <span style="color:#c8c8c8">View all</span></div><svg class="i" style="left:1883px;top:412px" width="9" height="13" viewBox="0 0 9 13"><path d="M0.8 4.5L4.5 0.8L8.2 4.5M0.8 8.5L4.5 12.2L8.2 8.5" fill="none" stroke="#9a9a9a" stroke-width="1.2"/></svg><svg class="i" style="left:1400px;top:441px" width="12" height="12" viewBox="0 0 12 12"><circle cx="6" cy="6" r="5.4" fill="none" stroke="#707070" stroke-width="1"/><path d="M3.4 6.2L5.3 8L8.6 4.2" fill="none" stroke="#707070" stroke-width="1.1"/></svg><div class="a" style="left:1419px;top:440px;font-size:12px;line-height:16px;color:#6e6e6e;text-decoration:line-through">定义 songItemType 与 momentListType 接口并填充示例数据</div><svg class="i" style="left:1400px;top:468px" width="12" height="12" viewBox="0 0 12 12"><circle cx="6" cy="6" r="6" fill="#4e4e4e"/><path d="M3 6H8.8M6.5 3.8L8.8 6L6.5 8.2" fill="none" stroke="#2a2a2a" stroke-width="1"/></svg><div class="a" style="left:1419px;top:467px;font-size:12px;line-height:16px;color:#e8e8e8">实现纵向布局与标题“互动广场”样式</div><div class="a" style="left:1393px;top:501px;font-size:12px;line-height:16px;color:#9a9a9a">Thought <span style="color:#6a6a6a">for 11s</span></div><div class="a" style="left:1391px;top:526px;width:510px;height:220px;border:1px solid #262626;border-radius:6px"></div><svg class="i" style="left:1402px;top:536px" width="10" height="9" viewBox="0 0 10 9"><g fill="none" stroke="#8a8a8a" stroke-width="1"><circle cx="2" cy="1.8" r="1.1"/><circle cx="2" cy="6.8" r="1.1"/><path d="M3.5 1.8H9.5M3.5 6.8H9.5"/></g></svg><div class="a" style="left:1418px;top:532px;font-size:12px;line-height:16px;color:#a0a0a0">7 of 7 Done</div><svg class="i" style="left:1883px;top:534px" width="9" height="13" viewBox="0 0 9 13"><path d="M0.8 4.5L4.5 0.8L8.2 4.5M0.8 8.5L4.5 12.2L8.2 8.5" fill="none" stroke="#9a9a9a" stroke-width="1.2"/></svg><svg class="i" style="left:1400px;top:564px" width="12" height="12" viewBox="0 0 12 12"><circle cx="6" cy="6" r="5.4" fill="none" stroke="#707070" stroke-width="1"/><path d="M3.4 6.2L5.3 8L8.6 4.2" fill="none" stroke="#707070" stroke-width="1.1"/></svg><div class="a" style="left:1419px;top:562.0px;font-size:12px;line-height:16px;color:#6e6e6e;text-decoration:line-through">定义 songItemType 与 momentListType 接口并填充示例数据</div><svg class="i" style="left:1400px;top:590px" width="12" height="12" viewBox="0 0 12 12"><circle cx="6" cy="6" r="5.4" fill="none" stroke="#707070" stroke-width="1"/><path d="M3.4 6.2L5.3 8L8.6 4.2" fill="none" stroke="#707070" stroke-width="1.1"/></svg><div class="a" style="left:1419px;top:588.7px;font-size:12px;line-height:16px;color:#6e6e6e;text-decoration:line-through">实现纵向布局与标题“互动广场”样式</div><svg class="i" style="left:1400px;top:617px" width="12" height="12" viewBox="0 0 12 12"><circle cx="6" cy="6" r="5.4" fill="none" stroke="#707070" stroke-width="1"/><path d="M3.4 6.2L5.3 8L8.6 4.2" fill="none" stroke="#707070" stroke-width="1.1"/></svg><div class="a" style="left:1419px;top:615.4px;font-size:12px;line-height:16px;color:#6e6e6e;text-decoration:line-through">使用 ForEach 强类型渲染互动内容列表</div><svg class="i" style="left:1400px;top:644px" width="12" height="12" viewBox="0 0 12 12"><circle cx="6" cy="6" r="5.4" fill="none" stroke="#707070" stroke-width="1"/><path d="M3.4 6.2L5.3 8L8.6 4.2" fill="none" stroke="#707070" stroke-width="1.1"/></svg><div class="a" style="left:1419px;top:642.1px;font-size:12px;line-height:16px;color:#6e6e6e;text-decoration:line-through">实现头像与文本水平布局且头像顶部对齐</div><svg class="i" style="left:1400px;top:670px" width="12" height="12" viewBox="0 0 12 12"><circle cx="6" cy="6" r="5.4" fill="none" stroke="#707070" stroke-width="1"/><path d="M3.4 6.2L5.3 8L8.6 4.2" fill="none" stroke="#707070" stroke-width="1.1"/></svg><div class="a" style="left:1419px;top:668.8px;font-size:12px;line-height:16px;color:#6e6e6e;text-decoration:line-through">实现歌曲卡片区域与播放/作者信息样式</div><svg class="i" style="left:1400px;top:697px" width="12" height="12" viewBox="0 0 12 12"><circle cx="6" cy="6" r="5.4" fill="none" stroke="#707070" stroke-width="1"/><path d="M3.4 6.2L5.3 8L8.6 4.2" fill="none" stroke="#707070" stroke-width="1.1"/></svg><div class="a" style="left:1419px;top:695.5px;font-size:12px;line-height:16px;color:#6e6e6e;text-decoration:line-through">实现底部操作区图标与数量展示</div><svg class="i" style="left:1400px;top:724px" width="12" height="12" viewBox="0 0 12 12"><circle cx="6" cy="6" r="5.4" fill="none" stroke="#707070" stroke-width="1"/><path d="M3.4 6.2L5.3 8L8.6 4.2" fill="none" stroke="#707070" stroke-width="1.1"/></svg><div class="a" style="left:1419px;top:722.2px;font-size:12px;line-height:16px;color:#6e6e6e;text-decoration:line-through">整体颜色、间距、分割线对齐示例图</div><div class="a" style="left:1393px;top:759px;font-size:13px;line-height:18px;color:#d4d4d4">已把页面按你的要求实现到</div><div class="a" style="left:1552px;top:760px;width:231px;height:16px;background:#242424;border-radius:3px"></div><div class="a m" style="left:1554.5px;top:761px;font-size:11px;line-height:16px;color:#7aa6da">entry/src/main/ets/pages/Moment.ets</div><div class="a" style="left:1784px;top:759px;font-size:13px;line-height:18px;color:#d4d4d4">，包含接口、数据</div><div class="a" style="left:1393px;top:778px;font-size:13px;line-height:18px;color:#d4d4d4">源、强类型 ForEach 渲染与样式。标题为“互动广场”，列表项头像与文本水平布局且头像</div><div class="a" style="left:1393px;top:798px;font-size:13px;line-height:18px;color:#d4d4d4">顶部对齐，背景与文字颜色参照示例图使用</div><div class="a" style="left:1644px;top:799px;width:139px;height:16px;background:#242424;border-radius:3px"></div><div class="a m" style="left:1646.5px;top:800px;font-size:11px;line-height:16px;color:#c8c8c8">.fontColor('#FFFFFF')</div><div class="a" style="left:1784px;top:798px;font-size:13px;line-height:18px;color:#d4d4d4">、灰度文案</div><div class="a" style="left:1852px;top:799px;width:44px;height:16px;background:#242424;border-radius:3px"></div><div class="a m" style="left:1854.5px;top:800px;font-size:11px;line-height:16px;color:#c8c8c8">#B3B3B</div><div class="a" style="left:1391px;top:818px;width:9px;height:16px;background:#242424;border-radius:3px"></div><div class="a m" style="left:1393.5px;top:819px;font-size:11px;line-height:16px;color:#c8c8c8">3</div><div class="a" style="left:1402px;top:817px;font-size:13px;line-height:18px;color:#d4d4d4">/</div><div class="a" style="left:1408px;top:818px;width:50px;height:16px;background:#242424;border-radius:3px"></div><div class="a m" style="left:1410.5px;top:819px;font-size:11px;line-height:16px;color:#c8c8c8">#9E9E9E</div><div class="a" style="left:1457px;top:817px;font-size:13px;line-height:18px;color:#d4d4d4">、背景</div><div class="a" style="left:1500px;top:818px;width:50px;height:16px;background:#242424;border-radius:3px"></div><div class="a m" style="left:1502.5px;top:819px;font-size:11px;line-height:16px;color:#c8c8c8">#000000</div><div class="a" style="left:1551px;top:817px;font-size:13px;line-height:18px;color:#d4d4d4">/卡片</div><div class="a" style="left:1586px;top:818px;width:52px;height:16px;background:#242424;border-radius:3px"></div><div class="a m" style="left:1588.5px;top:819px;font-size:11px;line-height:16px;color:#c8c8c8">#2B2B2B</div><div class="a" style="left:1639px;top:817px;font-size:13px;line-height:18px;color:#d4d4d4">。使用 V2 组件与 API16 语法，列表禁用回</div><div class="a" style="left:1393px;top:837px;font-size:13px;line-height:18px;color:#d4d4d4">弹，已加</div><div class="a" style="left:1447px;top:838px;width:116px;height:16px;background:#242424;border-radius:3px"></div><div class="a m" style="left:1449.5px;top:839px;font-size:11px;line-height:16px;color:#c8c8c8">.expandSafeArea()</div><div class="a" style="left:1563px;top:837px;font-size:13px;line-height:18px;color:#d4d4d4">。</div><div class="a" style="left:1393px;top:862px;font-size:13px;line-height:18px;color:#d4d4d4">你可以直接运行查看效果。如需微调色值或间距，我再按图细调。</div><svg class="i" style="left:1393px;top:902px" width="12" height="11" viewBox="0 0 12 11"><path d="M0 1H10M0 4H12M0 7H9M0 10H11" stroke="#6a6a6a" stroke-width="1.4"/></svg><div class="a" style="left:1409px;top:900px;font-size:11.4px;line-height:16px;color:#8c8c8c">Review Changes</div><svg class="i" style="left:1815px;top:902px" width="11" height="11" viewBox="0 0 11 11"><path d="M3 4.5V10.5M3 4.5L5.5 0.5Q7 0.7 6.8 2.5L6.4 4H9.8Q10.8 4.3 10.5 5.5L9.5 9.6Q9.2 10.5 8.3 10.5H3M0.5 4.5H3V10.5H0.5Z" fill="none" stroke="#9a9a9a" stroke-width="1"/></svg><svg class="i" style="left:1838px;top:903px" width="11" height="11" viewBox="0 0 11 11"><path d="M8 6.5V0.5M8 6.5L5.5 10.5Q4 10.3 4.2 8.5L4.6 7H1.2Q0.2 6.7 0.5 5.5L1.5 1.4Q1.8 0.5 2.7 0.5H8M10.5 6.5H8V0.5H10.5Z" fill="none" stroke="#9a9a9a" stroke-width="1"/></svg><svg class="i" style="left:1862px;top:902px" width="12" height="12" viewBox="0 0 12 12"><g fill="none" stroke="#9a9a9a" stroke-width="1.1"><rect x="3.5" y="3.5" width="8" height="8" rx="1"/><path d="M2.5 8.5H1.5Q0.5 8.5 0.5 7.5V1.5Q0.5 0.5 1.5 0.5H7.5Q8.5 0.5 8.5 1.5V2.5"/></g></svg><div class="a" style="left:1887px;top:907px;width:2.2px;height:2.2px;background:#9a9a9a;border-radius:50%"></div><div class="a" style="left:1891.5px;top:907px;width:2.2px;height:2.2px;background:#9a9a9a;border-radius:50%"></div><div class="a" style="left:1896px;top:907px;width:2.2px;height:2.2px;background:#9a9a9a;border-radius:50%"></div><div class="a" style="left:1911px;top:298px;width:8px;height:643px;background:#1f1f1f"></div><svg class="i" style="left:0;top:0" width="1919" height="941" viewBox="0 0 1919 941"><path d="M1341.5 877.2L1344.2 881.8L1416 920Z" fill="#f0241c"/><path d="M1331.5 876L1345.5 875L1342.3 879.2L1339.5 888Z" fill="#f0241c"/></svg></body></html>
